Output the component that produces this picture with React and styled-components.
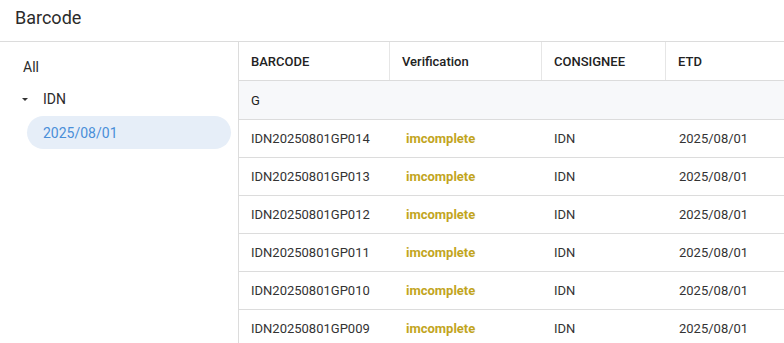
import styled, { createGlobalStyle } from "styled-components";

const GlobalStyle = createGlobalStyle`
  html, body {
    margin: 0;
    padding: 0;
    background: #fff;
    overflow: hidden;
  }
  body {
    font-family: Roboto, "Liberation Sans", Arial, sans-serif;
    color: #333;
  }
  *, *::before, *::after {
    box-sizing: border-box;
  }
`;

const Page = styled.div`
  width: 784px;
  height: 343px;
  display: flex;
  flex-direction: column;
`;

const Header = styled.div`
  height: 42px;
  flex-shrink: 0;
  display: flex;
  align-items: center;
  padding: 0 0 6px 15px;
  border-bottom: 1px solid #dcdcdc;
  font-size: 18px;
  color: #2b2b2b;
`;

const Body = styled.div`
  display: flex;
  flex: 1;
  min-height: 0;
`;

const Sidebar = styled.div`
  width: 239px;
  flex-shrink: 0;
  border-right: 1px solid #dcdcdc;
  padding-top: 12px;
  display: flex;
  flex-direction: column;
`;

const TreeItem = styled.div`
  display: flex;
  align-items: center;
  height: ${(p) => (p.$selected ? "33px" : "26px")};
  margin: ${(p) => p.$mt || 0}px 7px 0 ${(p) => (p.$selected ? 27 : 0)}px;
  padding-left: ${(p) => p.$indent}px;
  border-radius: 17px;
  background: ${(p) => (p.$selected ? "#e6eef8" : "transparent")};
  color: ${(p) => (p.$selected ? "#4a8fd8" : "#2b2b2b")};
  font-size: 14px;
`;

const Caret = styled.span`
  width: 0;
  height: 0;
  border-left: 3px solid transparent;
  border-right: 3px solid transparent;
  border-top: 3px solid #333;
  margin-right: 15px;
`;

const Table = styled.div`
  flex: 1;
  display: flex;
  flex-direction: column;
  overflow: hidden;
`;

const Row = styled.div`
  display: grid;
  grid-template-columns: 151px 152px 124px 1fr;
  height: ${(p) => p.$h}px;
  border-bottom: 1px solid #dcdcdc;
  background: ${(p) => p.$bg || "#fff"};
  flex-shrink: 0;
`;

const HeadCell = styled.div`
  display: flex;
  align-items: center;
  padding-left: 12px;
  font-size: 13px;
  font-weight: 500;
  color: #222;
  border-right: ${(p) => (p.$last ? "none" : "1px solid #e6e6e6")};
`;

const Cell = styled.div`
  display: flex;
  align-items: center;
  padding-left: ${(p) => p.$pad || 12}px;
  font-size: 13px;
  color: #333;
`;

const GroupCell = styled(Cell)`
  grid-column: 1 / -1;
  color: #222;
`;

const Status = styled.span`
  color: #c2a51e;
  font-weight: 700;
`;

const rows = ["014", "013", "012", "011", "010", "009"];

export default function App() {
  return (
    <>
      <GlobalStyle />
      <Page>
        <Header>Barcode</Header>
        <Body>
          <Sidebar>
            <TreeItem $indent={23}>All</TreeItem>
            <TreeItem $indent={22} $mt={6}>
              <Caret />
              IDN
            </TreeItem>
            <TreeItem $selected $indent={16} $mt={4}>
              2025/08/01
            </TreeItem>
          </Sidebar>
          <Table>
            <Row $h={39}>
              <HeadCell>BARCODE</HeadCell>
              <HeadCell>Verification</HeadCell>
              <HeadCell>CONSIGNEE</HeadCell>
              <HeadCell $last>ETD</HeadCell>
            </Row>
            <Row $h={39} $bg="#f7f8fa">
              <GroupCell>G</GroupCell>
            </Row>
            {rows.map((n) => (
              <Row $h={38} key={n}>
                <Cell>IDN20250801GP{n}</Cell>
                <Cell $pad={16}>
                  <Status>imcomplete</Status>
                </Cell>
                <Cell>IDN</Cell>
                <Cell $pad={13}>2025/08/01</Cell>
              </Row>
            ))}
          </Table>
        </Body>
      </Page>
    </>
  );
}
